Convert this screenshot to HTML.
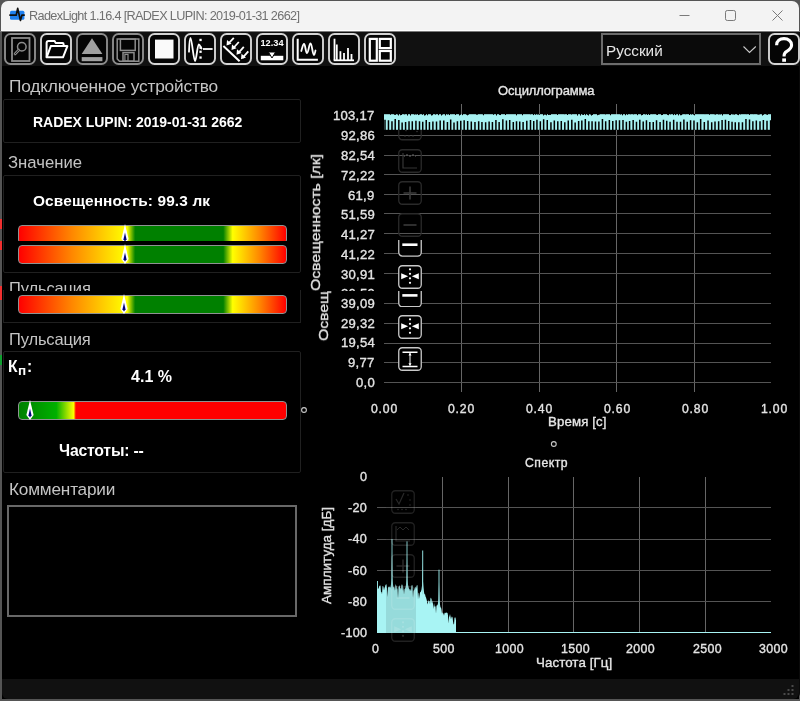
<!DOCTYPE html>
<html><head><meta charset="utf-8"><style>
html,body{margin:0;padding:0;width:800px;height:701px;overflow:hidden;background:#555;}
.t{position:absolute;font-family:"Liberation Sans",sans-serif;white-space:pre;will-change:transform;}
.a{position:absolute;}
</style></head><body>
<div class="a" style="left:1.5px;top:31px;width:798.5px;height:668px;background:#0a0a0a;border-radius:0 0 6px 6px;"></div><div class="a" style="left:1.5px;top:31px;width:797px;height:668px;background:#000;"></div>
<div class="a" style="left:3px;top:99px;width:298px;height:44px;border:1px solid #202020;background:transparent;border-radius:2px;box-sizing:border-box;"></div><div class="a" style="left:3px;top:175px;width:298px;height:98px;border:1px solid #202020;background:transparent;border-radius:2px;box-sizing:border-box;"></div><div class="a" style="left:3px;top:290px;width:298px;height:33px;border:1px solid #202020;border-top:none;background:transparent;border-radius:0px;box-sizing:border-box;"></div><div class="a" style="left:3px;top:351px;width:298px;height:122px;border:1px solid #202020;background:transparent;border-radius:2px;box-sizing:border-box;"></div><div class="a" style="left:7px;top:505px;width:290px;height:111.5px;border:2px solid #686868;background:transparent;border-radius:0px;box-sizing:border-box;"></div><div class="a" style="left:16px;top:223px;width:273px;height:18px;overflow:hidden"><div class="a" style="left:2px;top:2px;width:269px;height:19px;border:1.7px solid #8f9393;border-radius:4px;box-sizing:border-box;background:linear-gradient(to right,#ff0000 0%,#ff8800 20%,#ffff00 40%,#ffff00 40.5%,#008000 43.5%,#008000 76.5%,#ffff00 80%,#ff8800 90%,#ff0000 100%);"></div></div><div class="a" style="left:18px;top:245px;width:269px;height:19px;border:1.7px solid #8f9393;border-radius:4px;box-sizing:border-box;background:linear-gradient(to right,#ff0000 0%,#ff8800 20%,#ffff00 40%,#ffff00 40.5%,#008000 43.5%,#008000 76.5%,#ffff00 80%,#ff8800 90%,#ff0000 100%);"></div><div class="a" style="left:18px;top:295px;width:269px;height:19px;border:1.7px solid #8f9393;border-radius:4px;box-sizing:border-box;background:linear-gradient(to right,#ff0000 0%,#ff8800 20%,#ffff00 40%,#ffff00 40.5%,#008000 43.5%,#008000 76.5%,#ffff00 80%,#ff8800 90%,#ff0000 100%);"></div><div class="a" style="left:18px;top:401px;width:269px;height:19px;border:1.7px solid #8f9393;border-radius:4px;box-sizing:border-box;background:linear-gradient(to right,#008000 0%,#00b000 14%,#ffff00 20.5%,#ff0000 21.3%,#ff0000 100%);"></div><svg class="a" style="left:121px;top:224px" width="8" height="17" viewBox="0 0 8 17"><path d="M4 0 L7.6 15.0 L4 20 L0.4 15.0 Z" fill="#fff"/><path d="M4 8.4 L5.5 15.2 L4 17.6 L2.5 15.2 Z" fill="#00007a"/></svg><svg class="a" style="left:121px;top:243.6px" width="8" height="20" viewBox="0 0 8 20"><path d="M4 0 L7.6 15.0 L4 20 L0.4 15.0 Z" fill="#fff"/><path d="M4 8.4 L5.5 15.2 L4 17.6 L2.5 15.2 Z" fill="#00007a"/></svg><svg class="a" style="left:120px;top:293.5px" width="8" height="20" viewBox="0 0 8 20"><path d="M4 0 L7.6 15.0 L4 20 L0.4 15.0 Z" fill="#fff"/><path d="M4 8.4 L5.5 15.2 L4 17.6 L2.5 15.2 Z" fill="#00007a"/></svg><svg class="a" style="left:26.4px;top:400px" width="8" height="20" viewBox="0 0 8 20"><path d="M4 0 L7.6 15.0 L4 20 L0.4 15.0 Z" fill="#fff"/><path d="M4 8.4 L5.5 15.2 L4 17.6 L2.5 15.2 Z" fill="#00007a"/></svg><div class="a" style="left:1px;top:1px;width:798px;height:30px;background:#f3f3f3;border-radius:7px 7px 0 0;"></div><div class="a" style="left:1px;top:30px;width:798px;height:1px;background:#fff;"></div><div class="a" style="left:0;top:31px;width:800px;height:1px;background:#7a7a7a;"></div><div class="a" style="left:1.5px;top:32px;width:797px;height:34px;background:#111;"></div><div class="a" style="left:1.5px;top:679px;width:797.5px;height:20px;background:#111;border-radius:0 0 6px 6px;"></div><svg class="a" style="left:8px;top:7px" width="18" height="15" viewBox="0 0 18 15"><rect x="2" y="3.8" width="14.4" height="9" rx="1.5" fill="#1f80f0"/><path d="M1.3 8.2 H8.2 L9.7 1.4 L12.4 13.4 L13.9 8.2 H16.8" fill="none" stroke="#111" stroke-width="1.7" stroke-linejoin="round"/></svg><svg class="a" style="left:670px;top:0" width="130" height="31" viewBox="0 0 130 31"><path d="M9.5 15.5 H19.5" stroke="#7a7a7a" stroke-width="1"/><rect x="55.5" y="10.5" width="10" height="10" rx="1.8" fill="none" stroke="#7a7a7a" stroke-width="1"/><path d="M102.5 10.5 L112.5 20.5 M112.5 10.5 L102.5 20.5" stroke="#7a7a7a" stroke-width="1"/></svg><svg class="a" style="left:4px;top:33px;will-change:transform" width="32" height="32" viewBox="0 0 32 32"><rect x="1" y="1" width="30" height="30" rx="5.5" fill="#050505" stroke="#8c8c8c" stroke-width="1.9"/><rect x="8" y="5" width="17.5" height="23" fill="none" stroke="#8c8c8c" stroke-width="1.8"/><circle cx="17.8" cy="13.7" r="4.3" fill="none" stroke="#8c8c8c" stroke-width="1.5"/><path d="M14.8 17 L11 21" stroke="#8c8c8c" stroke-width="2.6" stroke-linecap="round"/><path d="M14.8 17 L11 21" stroke="#111" stroke-width="0.9" stroke-linecap="round"/></svg><svg class="a" style="left:40px;top:33px;will-change:transform" width="32" height="32" viewBox="0 0 32 32"><rect x="1" y="1" width="30" height="30" rx="5.5" fill="#050505" stroke="#d4d4d4" stroke-width="1.9"/><path d="M6.6 24.3 V10 Q6.6 8 8.6 8 H14.6 L15.6 9.9 H22.6 Q23.6 9.9 23.6 11.2 V12.8" fill="none" stroke="#fff" stroke-width="2" stroke-linejoin="round"/><path d="M6.6 24.3 H23 L27.4 13.1 H10.8 Z" fill="none" stroke="#fff" stroke-width="2" stroke-linejoin="round"/></svg><svg class="a" style="left:76px;top:33px;will-change:transform" width="32" height="32" viewBox="0 0 32 32"><rect x="1" y="1" width="30" height="30" rx="5.5" fill="#050505" stroke="#8c8c8c" stroke-width="1.9"/><path d="M16 5.2 L26.4 21 H5.7 Z" fill="#a0a0a0"/><rect x="5.7" y="24.1" width="20.7" height="4.1" fill="#a0a0a0"/></svg><svg class="a" style="left:112px;top:33px;will-change:transform" width="32" height="32" viewBox="0 0 32 32"><rect x="1" y="1" width="30" height="30" rx="5.5" fill="#050505" stroke="#8c8c8c" stroke-width="1.9"/><path d="M5.2 6.1 H26.8 V28.2 H7.5 L5.2 25.9 Z" fill="none" stroke="#8c8c8c" stroke-width="1.5"/><rect x="8.4" y="6.1" width="14.8" height="11.3" fill="none" stroke="#8c8c8c" stroke-width="1.5"/><rect x="11" y="19.6" width="11" height="8.6" fill="none" stroke="#8c8c8c" stroke-width="1.5"/><rect x="12.9" y="21.4" width="3.1" height="6.8" fill="none" stroke="#8c8c8c" stroke-width="1.2"/></svg><svg class="a" style="left:148px;top:33px;will-change:transform" width="32" height="32" viewBox="0 0 32 32"><rect x="1" y="1" width="30" height="30" rx="5.5" fill="#050505" stroke="#d4d4d4" stroke-width="1.9"/><rect x="7" y="6.6" width="18.5" height="18.9" fill="#fafafa"/></svg><svg class="a" style="left:184px;top:33px;will-change:transform" width="32" height="32" viewBox="0 0 32 32"><rect x="1" y="1" width="30" height="30" rx="5.5" fill="#050505" stroke="#d4d4d4" stroke-width="1.9"/><path d="M5 18.7 C5.3 10 5.8 4.8 6.5 4.8 C7.8 4.8 9.6 28 11 28 C12.4 28 13.4 11.5 14.8 11.5 C15.8 11.5 16.5 14 17.5 15.5" fill="none" stroke="#fff" stroke-width="1.8" stroke-linecap="round"/><g fill="#fff"><rect x="15.4" y="5.8" width="2.3" height="2.3"/><rect x="15.4" y="13.6" width="2.3" height="2.3"/><rect x="15.4" y="17.6" width="2.3" height="2.3"/><rect x="15.4" y="23.4" width="2.3" height="2.3"/></g><path d="M19 16 H28.6" stroke="#fff" stroke-width="1.8"/></svg><svg class="a" style="left:220px;top:33px;will-change:transform" width="32" height="32" viewBox="0 0 32 32"><rect x="1" y="1" width="30" height="30" rx="5.5" fill="#050505" stroke="#d4d4d4" stroke-width="1.9"/><path d="M3.4 12.9 L19.6 28.2" stroke="#fff" stroke-width="2"/><g fill="none" stroke="#fff" stroke-width="1.8"><path d="M13.8 4.8 L8 11"/><path d="M18.8 9 L13 15.5"/><path d="M23.8 13.8 L18 20.3"/><path d="M28.3 18.3 L22.5 24.8"/></g><g fill="#fff"><path d="M6.5 12.5 L7 7 L11.5 10.8 Z"/><path d="M11.5 17 L12 11.5 L16.5 15.3 Z"/><path d="M16.5 21.8 L17 16.3 L21.5 20.1 Z"/><path d="M21 26.3 L21.5 20.8 L26 24.6 Z"/></g></svg><svg class="a" style="left:256px;top:33px;will-change:transform" width="32" height="32" viewBox="0 0 32 32"><rect x="1" y="1" width="30" height="30" rx="5.5" fill="#050505" stroke="#d4d4d4" stroke-width="1.9"/><text x="16" y="13.4" text-anchor="middle" font-family="Liberation Sans" font-weight="bold" font-size="9.6" fill="#fff" textLength="23" lengthAdjust="spacingAndGlyphs">12.34</text><rect x="4.8" y="22.8" width="22.5" height="4.5" fill="#fff"/><path d="M12.4 19 H19.6 L16 25 Z" fill="#fff" stroke="#050505" stroke-width="1"/></svg><svg class="a" style="left:292px;top:33px;will-change:transform" width="32" height="32" viewBox="0 0 32 32"><rect x="1" y="1" width="30" height="30" rx="5.5" fill="#050505" stroke="#d4d4d4" stroke-width="1.9"/><path d="M5.7 5.7 V26.8 H25.9" fill="none" stroke="#fff" stroke-width="2"/><path d="M9.3 18 C10.5 14 11 11 12 11 C13.5 11 13.5 20 15 20 C16.5 20 17 10.5 18.5 10.5 C20 10.5 20.5 22 22 22 C22.8 22 23 19 23.5 17.5" fill="none" stroke="#fff" stroke-width="1.8" stroke-linecap="round"/></svg><svg class="a" style="left:328px;top:33px;will-change:transform" width="32" height="32" viewBox="0 0 32 32"><rect x="1" y="1" width="30" height="30" rx="5.5" fill="#050505" stroke="#d4d4d4" stroke-width="1.9"/><g stroke="#fff" stroke-width="1.8"><path d="M5.7 27.3 H26"/><path d="M6.5 5.7 V27.3"/><path d="M8.8 11.5 V27.3"/><path d="M12.4 18.2 V27.3"/><path d="M16 20 V27.3"/><path d="M20 15 V27.3"/><path d="M23.5 21 V27.3"/></g></svg><svg class="a" style="left:364px;top:33px;will-change:transform" width="32" height="32" viewBox="0 0 32 32"><rect x="1" y="1" width="30" height="30" rx="5.5" fill="#050505" stroke="#d4d4d4" stroke-width="1.9"/><g fill="none" stroke="#fff" stroke-width="2.2"><rect x="5.8" y="5.9" width="7" height="21.8"/><rect x="15.8" y="5.9" width="11" height="9.2"/><rect x="15.8" y="18" width="11" height="9.7"/></g></svg><svg class="a" style="left:768px;top:33px;will-change:transform" width="32" height="32" viewBox="0 0 32 32"><rect x="1" y="1" width="30" height="30" rx="5.5" fill="#050505" stroke="#d4d4d4" stroke-width="1.9"/><path d="M8.6 12.2 C8.6 7.8 11.8 5.6 16 5.6 C20.4 5.6 23.6 8.4 23.6 12 C23.6 15.4 21.2 16.9 18.8 18.3 C16.9 19.4 16.1 20.6 16.1 22.6 V23.6" fill="none" stroke="#fff" stroke-width="3.1"/><rect x="14.2" y="25.4" width="3.8" height="3.4" fill="#fff"/></svg><div class="a" style="left:601px;top:33px;width:160px;height:32px;border:2px solid #6c6c6c;background:#0a0a0a;box-sizing:border-box;"></div><svg class="a" style="left:740px;top:42px" width="20" height="14" viewBox="0 0 20 14"><path d="M3.5 4.5 L9.5 10.5 L15.8 4.5" fill="none" stroke="#c8c8c8" stroke-width="1.1"/></svg><div class="a" style="left:0;top:270px;width:300px;height:20.5px;overflow:hidden"><div class="t" style="left:9.3px;top:10.07px;font-size:16.5px;line-height:16.5px;color:#c4c4c4;letter-spacing:-0.144px">Пульсация</div></div><svg class="a" style="left:0;top:0" width="800" height="701" viewBox="0 0 800 701"><path d="M461.5 104 V392" stroke="#666666" stroke-width="1"/><path d="M539.5 104 V392" stroke="#666666" stroke-width="1"/><path d="M616.5 104 V392" stroke="#666666" stroke-width="1"/><path d="M694.5 104 V392" stroke="#666666" stroke-width="1"/><path d="M384 135.5 H771" stroke="#545454" stroke-width="1"/><path d="M384 155.5 H771" stroke="#545454" stroke-width="1"/><path d="M384 174.5 H771" stroke="#545454" stroke-width="1"/><path d="M384 194.5 H771" stroke="#545454" stroke-width="1"/><path d="M384 213.5 H771" stroke="#545454" stroke-width="1"/><path d="M384 233.5 H771" stroke="#545454" stroke-width="1"/><path d="M384 253.5 H771" stroke="#545454" stroke-width="1"/><path d="M384 273.5 H771" stroke="#545454" stroke-width="1"/><path d="M384 303.5 H771" stroke="#545454" stroke-width="1"/><path d="M384 323.5 H771" stroke="#545454" stroke-width="1"/><path d="M384 343.5 H771" stroke="#545454" stroke-width="1"/><path d="M384 362.5 H771" stroke="#545454" stroke-width="1"/><path d="M384 382.5 H771" stroke="#545454" stroke-width="1"/><rect x="384" y="114.2" width="387" height="15.6" fill="#a8f2f2"/><path d="M385.00 119.83 V130.00 M388.47 120.29 V130.00 M391.97 121.19 V130.00 M395.21 119.05 V130.00 M398.83 119.91 V130.00 M402.14 122.48 V130.00 M405.58 121.93 V130.00 M409.02 121.24 V130.00 M412.29 121.22 V130.00 M415.93 120.83 V130.00 M419.50 121.35 V130.00 M422.73 121.65 V130.00 M426.22 120.05 V130.00 M429.44 122.03 V130.00 M432.88 121.52 V130.00 M436.51 121.50 V130.00 M440.18 120.38 V130.00 M443.78 120.56 V130.00 M447.44 122.08 V130.00 M450.69 119.48 V130.00 M454.00 122.38 V130.00 M457.42 121.19 V130.00 M460.77 120.78 V130.00 M464.16 120.23 V130.00 M467.65 121.04 V130.00 M471.31 121.39 V130.00 M474.97 122.00 V130.00 M478.67 121.35 V130.00 M481.95 122.01 V130.00 M485.63 122.17 V130.00 M489.12 121.50 V130.00 M492.42 121.91 V130.00 M495.91 120.00 V130.00 M499.14 121.99 V130.00 M502.83 119.31 V130.00 M506.43 120.44 V130.00 M509.71 120.03 V130.00 M513.29 122.05 V130.00 M516.52 121.15 V130.00 M519.74 121.51 V130.00 M523.10 122.08 V130.00 M526.79 120.77 V130.00 M530.49 120.08 V130.00 M533.73 121.10 V130.00 M536.95 119.69 V130.00 M540.35 121.14 V130.00 M543.63 119.15 V130.00 M547.26 120.10 V130.00 M550.94 122.14 V130.00 M554.33 120.61 V130.00 M557.79 121.25 V130.00 M561.29 120.96 V130.00 M564.80 122.29 V130.00 M568.25 120.51 V130.00 M571.81 119.83 V130.00 M575.16 122.42 V130.00 M578.63 120.92 V130.00 M581.83 120.45 V130.00 M585.32 119.07 V130.00 M588.83 121.21 V130.00 M592.06 121.20 V130.00 M595.49 121.38 V130.00 M598.87 121.47 V130.00 M602.44 119.08 V130.00 M605.67 121.37 V130.00 M609.35 119.88 V130.00 M612.78 121.07 V130.00 M616.14 120.27 V130.00 M619.49 120.29 V130.00 M622.99 120.05 V130.00 M626.38 121.70 V130.00 M629.59 120.99 V130.00 M633.16 120.09 V130.00 M636.47 121.81 V130.00 M639.79 119.66 V130.00 M643.21 121.44 V130.00 M646.46 120.13 V130.00 M649.83 121.92 V130.00 M653.25 121.99 V130.00 M656.53 120.18 V130.00 M660.06 122.10 V130.00 M663.48 119.79 V130.00 M666.74 120.85 V130.00 M670.04 121.82 V130.00 M673.66 119.64 V130.00 M677.00 121.83 V130.00 M680.52 121.82 V130.00 M683.89 119.45 V130.00 M687.24 121.78 V130.00 M690.57 120.21 V130.00 M693.98 120.47 V130.00 M697.38 122.22 V130.00 M700.66 119.02 V130.00 M704.33 122.08 V130.00 M708.03 120.52 V130.00 M711.70 122.25 V130.00 M715.01 121.61 V130.00 M718.63 121.32 V130.00 M722.09 120.01 V130.00 M725.46 119.80 V130.00 M728.70 121.06 V130.00 M732.04 121.84 V130.00 M735.26 122.16 V130.00 M738.81 122.23 V130.00 M742.46 122.15 V130.00 M745.95 119.05 V130.00 M749.52 119.60 V130.00 M752.87 121.32 V130.00 M756.33 120.45 V130.00 M760.00 121.14 V130.00 M763.37 119.88 V130.00 M767.00 120.67 V130.00 M770.59 120.23 V130.00" stroke="#000" stroke-width="1.5"/><path d="M390.50 114 V114.74 M394.50 114 V114.75 M395.50 114 V114.87 M397.50 114 V114.35 M398.50 114 V115.47 M400.50 114 V115.28 M401.50 114 V114.99 M402.50 114 V114.00 M404.50 114 V114.34 M407.50 114 V115.54 M410.50 114 V115.51 M414.50 114 V114.58 M415.50 114 V114.23 M416.50 114 V114.48 M418.50 114 V115.08 M419.50 114 V114.50 M422.50 114 V114.77 M424.50 114 V115.56 M425.50 114 V115.20 M427.50 114 V115.26 M430.50 114 V114.07 M431.50 114 V115.53 M432.50 114 V115.21 M435.50 114 V114.57 M438.50 114 V115.20 M441.50 114 V115.51 M442.50 114 V114.55 M445.50 114 V115.48 M447.50 114 V114.51 M448.50 114 V114.13 M449.50 114 V115.10 M451.50 114 V114.08 M455.50 114 V114.95 M459.50 114 V115.47 M460.50 114 V114.79 M462.50 114 V115.17 M466.50 114 V114.70 M467.50 114 V115.35 M468.50 114 V114.73 M476.50 114 V114.65 M477.50 114 V114.60 M482.50 114 V114.14 M483.50 114 V115.25 M493.50 114 V114.78 M496.50 114 V115.51 M499.50 114 V114.88 M500.50 114 V115.07 M505.50 114 V115.03 M516.50 114 V115.34 M522.50 114 V115.25 M530.50 114 V114.26 M533.50 114 V115.10 M535.50 114 V114.75 M536.50 114 V114.09 M537.50 114 V114.51 M538.50 114 V114.31 M539.50 114 V114.74 M543.50 114 V115.45 M544.50 114 V114.65 M545.50 114 V114.66 M546.50 114 V115.33 M548.50 114 V114.98 M549.50 114 V114.87 M550.50 114 V114.93 M557.50 114 V114.95 M564.50 114 V114.17 M567.50 114 V115.01 M571.50 114 V114.47 M577.50 114 V115.57 M580.50 114 V115.57 M582.50 114 V114.76 M583.50 114 V114.99 M585.50 114 V115.25 M587.50 114 V114.85 M588.50 114 V115.50 M590.50 114 V114.43 M591.50 114 V115.58 M592.50 114 V114.97 M597.50 114 V115.22 M598.50 114 V114.85 M599.50 114 V114.47 M605.50 114 V114.40 M610.50 114 V115.25 M620.50 114 V114.47 M622.50 114 V115.34 M625.50 114 V115.25 M627.50 114 V114.77 M630.50 114 V114.25 M633.50 114 V114.37 M637.50 114 V115.16 M641.50 114 V115.35 M642.50 114 V115.03 M645.50 114 V114.47 M647.50 114 V114.98 M649.50 114 V115.00 M650.50 114 V114.17 M652.50 114 V114.09 M656.50 114 V114.69 M657.50 114 V114.96 M661.50 114 V115.12 M662.50 114 V115.01 M667.50 114 V114.88 M668.50 114 V115.20 M670.50 114 V114.38 M673.50 114 V115.14 M675.50 114 V115.07 M676.50 114 V114.20 M678.50 114 V115.40 M680.50 114 V115.27 M681.50 114 V115.16 M682.50 114 V114.24 M685.50 114 V114.19 M689.50 114 V115.00 M691.50 114 V114.53 M693.50 114 V114.62 M694.50 114 V115.33 M704.50 114 V114.05 M705.50 114 V114.06 M709.50 114 V114.75 M714.50 114 V114.25 M715.50 114 V114.60 M718.50 114 V114.41 M719.50 114 V114.26 M720.50 114 V114.38 M722.50 114 V115.48 M729.50 114 V115.07 M730.50 114 V115.08 M732.50 114 V114.32 M733.50 114 V114.37 M734.50 114 V114.64 M737.50 114 V114.75 M738.50 114 V115.17 M740.50 114 V114.38 M746.50 114 V114.10 M749.50 114 V114.88 M753.50 114 V114.11 M757.50 114 V114.39 M758.50 114 V114.64 M759.50 114 V114.41 M761.50 114 V114.08 M762.50 114 V115.55 M763.50 114 V114.81 M766.50 114 V114.50 M767.50 114 V114.87" stroke="#000" stroke-width="1"/><path d="M442.5 477 V632" stroke="#666666" stroke-width="1"/><path d="M508.5 477 V632" stroke="#666666" stroke-width="1"/><path d="M573.5 477 V632" stroke="#666666" stroke-width="1"/><path d="M639.5 477 V632" stroke="#666666" stroke-width="1"/><path d="M705.5 477 V632" stroke="#666666" stroke-width="1"/><path d="M377 507.5 H771" stroke="#545454" stroke-width="1"/><path d="M377 539.5 H771" stroke="#545454" stroke-width="1"/><path d="M377 570.5 H771" stroke="#545454" stroke-width="1"/><path d="M377 601.5 H771" stroke="#545454" stroke-width="1"/><path d="M377.0 632.5 L377.0 588.1 L377.5 589.1 L378.0 588.1 L378.5 588.9 L379.0 587.0 L379.5 585.6 L380.0 586.0 L380.5 585.2 L381.0 592.2 L381.5 591.8 L382.0 594.3 L382.5 586.3 L383.0 585.9 L383.5 587.0 L384.0 590.4 L384.5 587.8 L385.0 586.9 L385.5 584.7 L386.0 584.7 L386.5 583.9 L387.0 588.7 L387.5 596.9 L388.0 587.0 L388.5 587.5 L389.0 586.1 L389.5 587.1 L390.0 587.5 L390.5 587.2 L391.0 584.3 L391.5 578.5 L392.0 551.0 L392.5 578.5 L393.0 584.3 L393.5 587.5 L394.0 587.1 L394.5 587.7 L395.0 590.7 L395.5 584.1 L396.0 585.2 L396.5 585.9 L397.0 589.7 L397.5 587.5 L398.0 598.6 L398.5 586.9 L399.0 586.2 L399.5 585.1 L400.0 587.8 L400.5 587.9 L401.0 589.8 L401.5 584.4 L402.0 584.7 L402.5 584.8 L403.0 590.9 L403.5 586.8 L404.0 594.4 L404.5 589.0 L405.0 588.8 L405.5 587.6 L406.0 584.6 L406.5 579.0 L407.0 553.4 L407.5 579.0 L408.0 584.6 L408.5 586.9 L409.0 588.8 L409.5 589.0 L410.0 590.9 L410.5 588.4 L411.0 591.5 L411.5 585.6 L412.0 585.2 L412.5 585.2 L413.0 598.0 L413.5 590.5 L414.0 590.5 L414.5 588.9 L415.0 587.0 L415.5 586.7 L416.0 589.1 L416.5 586.2 L417.0 585.0 L417.5 585.4 L418.0 599.4 L418.5 593.4 L419.0 592.6 L419.5 598.7 L420.0 592.2 L420.5 592.2 L421.0 591.2 L421.5 589.4 L422.0 585.8 L422.5 562.5 L423.0 581.6 L423.5 587.7 L424.0 591.9 L424.5 594.5 L425.0 594.1 L425.5 596.6 L426.0 597.6 L426.5 599.3 L427.0 601.3 L427.5 604.5 L428.0 602.5 L428.5 600.0 L429.0 601.3 L429.5 601.1 L430.0 604.2 L430.5 597.4 L431.0 598.4 L431.5 598.5 L432.0 603.7 L432.5 600.2 L433.0 604.1 L433.5 609.1 L434.0 603.0 L434.5 606.1 L435.0 606.9 L435.5 605.7 L436.0 613.6 L436.5 605.4 L437.0 605.6 L437.5 605.1 L438.0 603.2 L438.5 599.1 L439.0 581.7 L439.5 599.8 L440.0 604.6 L440.5 607.4 L441.0 607.5 L441.5 609.4 L442.0 613.7 L442.5 612.3 L443.0 613.3 L443.5 613.7 L444.0 615.8 L444.5 613.3 L445.0 612.6 L445.5 613.2 L446.0 612.6 L446.5 612.4 L447.0 613.0 L447.5 612.8 L448.0 615.4 L448.5 623.4 L449.0 617.3 L449.5 616.0 L450.0 614.1 L450.5 616.4 L451.0 619.6 L451.5 616.3 L452.0 617.8 L452.5 616.4 L453.0 621.2 L453.5 623.9 L454.0 624.6 L454.5 617.7 L455.0 617.5 L455.5 617.6 L456.0 620.6 L456.0 632.5 Z" fill="#a8f4f4"/><path d="M377.5 581 V589" stroke="#90dcdc" stroke-width="1"/><path d="M392 539 V589" stroke="#90dcdc" stroke-width="1"/><path d="M407 541.4 V589" stroke="#90dcdc" stroke-width="1"/><path d="M422.7 550.5 V594.36" stroke="#90dcdc" stroke-width="1"/><path d="M439 569.7 V607.4" stroke="#90dcdc" stroke-width="1"/><path d="M377 632.5 H771" stroke="#a8f4f4" stroke-width="1"/></svg><div class="a" style="left:300px;top:100px;width:40px;height:191px;overflow:hidden"><div class="t" style="left:9.25px;top:190.60000000000002px;font-size:13px;line-height:13px;color:#e4e4e4;transform-origin:0 0;transform:rotate(-90deg) scaleX(1.209179170344219);-webkit-text-stroke:0.3px #e4e4e4">Освещенность [лк]</div></div><div class="a" style="left:300px;top:291px;width:40px;height:60px;overflow:hidden"><div class="t" style="left:17.25px;top:49.5px;font-size:13px;line-height:13px;color:#e4e4e4;transform-origin:0 0;transform:rotate(-90deg) scaleX(1.209179170344219);-webkit-text-stroke:0.3px #e4e4e4">Освещенность [лк]</div></div><div class="t" style="left:319.85px;top:603.6px;font-size:13px;line-height:13px;color:#e4e4e4;transform-origin:0 0;transform:rotate(-90deg) scaleX(1.038543897216274);-webkit-text-stroke:0.3px #e4e4e4">Амплитуда [дБ]</div><div class="a" style="left:330px;top:285px;width:50px;height:5.6px;overflow:hidden"><div class="t" style="left:10.82px;top:1.67px;font-size:13.1px;line-height:13.1px;color:#e4e4e4;letter-spacing:0.25px;-webkit-text-stroke:0.35px #e4e4e4">20,59</div></div><svg class="a" style="left:398px;top:130px" width="24" height="10.5" viewBox="0 13.5 24 10.5"><rect x="0.75" y="0.75" width="22.5" height="22.5" rx="3.5" fill="none" stroke="#2a2a2a" stroke-width="1.3"/><g fill="#353535"><circle cx="7" cy="19.5" r="0.8"/><circle cx="11" cy="19.5" r="0.8"/><circle cx="15" cy="19.5" r="0.8"/><circle cx="19" cy="15" r="0.8"/><circle cx="19" cy="10" r="0.8"/><circle cx="17" cy="5" r="0.8"/></g><path d="M5 9 L8 14 L13 3" fill="none" stroke="#353535" stroke-width="1.2"/></svg><svg class="a" style="left:398px;top:149.2px" width="24" height="24" viewBox="0 0 24 24"><rect x="0.75" y="0.75" width="22.5" height="22.5" rx="3.5" fill="none" stroke="#2a2a2a" stroke-width="1.3"/><path d="M5 4 V19 H19" fill="none" stroke="#353535" stroke-width="1.2"/><path d="M6 8 L9 5 L12 8 L15 5 L18 8" fill="none" stroke="#353535" stroke-width="1"/></svg><svg class="a" style="left:398px;top:181px" width="24" height="24" viewBox="0 0 24 24"><rect x="0.75" y="0.75" width="22.5" height="22.5" rx="3.5" fill="none" stroke="#2a2a2a" stroke-width="1.3"/><path d="M12 5.5 V18.5 M5.5 12 H18.5" stroke="#3a3a3a" stroke-width="1.6"/></svg><svg class="a" style="left:398px;top:213px" width="24" height="24" viewBox="0 0 24 24"><rect x="0.75" y="0.75" width="22.5" height="22.5" rx="3.5" fill="none" stroke="#2a2a2a" stroke-width="1.3"/><path d="M5.5 12 H18.5" stroke="#3a3a3a" stroke-width="1.6"/></svg><svg class="a" style="left:398px;top:240.4px" width="24" height="16.799999999999983" viewBox="0 7.200000000000017 24 16.799999999999983"><rect x="0.75" y="0.75" width="22.5" height="22.5" rx="3.5" fill="#000" stroke="#c8c8c8" stroke-width="1.3"/><rect x="4.3" y="10.6" width="15.2" height="2.6" fill="#fff"/></svg><svg class="a" style="left:398px;top:265px" width="24" height="24" viewBox="0 0 24 24"><rect x="0.75" y="0.75" width="22.5" height="22.5" rx="3.5" fill="#000" stroke="#c8c8c8" stroke-width="1.3"/><g fill="#fff"><path d="M3.2 8.3 L10.2 11.3 L3.2 14.3 Z"/><path d="M20.8 8.3 L13.8 11.3 L20.8 14.3 Z"/><circle cx="12" cy="4.3" r="1.1"/><circle cx="12" cy="8.8" r="1.1"/><circle cx="12" cy="13.3" r="1.1"/><circle cx="12" cy="17.8" r="1.1"/></g></svg><svg class="a" style="left:398px;top:290.7px" width="24" height="16.5" viewBox="0 7.5 24 16.5"><rect x="0.75" y="0.75" width="22.5" height="22.5" rx="3.5" fill="#000" stroke="#c8c8c8" stroke-width="1.3"/><rect x="4.3" y="10.6" width="15.2" height="2.6" fill="#fff"/></svg><svg class="a" style="left:398px;top:315px" width="24" height="24" viewBox="0 0 24 24"><rect x="0.75" y="0.75" width="22.5" height="22.5" rx="3.5" fill="#000" stroke="#c8c8c8" stroke-width="1.3"/><g fill="#fff"><path d="M3.2 8.3 L10.2 11.3 L3.2 14.3 Z"/><path d="M20.8 8.3 L13.8 11.3 L20.8 14.3 Z"/><circle cx="12" cy="4.3" r="1.1"/><circle cx="12" cy="8.8" r="1.1"/><circle cx="12" cy="13.3" r="1.1"/><circle cx="12" cy="17.8" r="1.1"/></g></svg><svg class="a" style="left:398px;top:347px" width="24" height="24" viewBox="0 0 24 24"><rect x="0.75" y="0.75" width="22.5" height="22.5" rx="3.5" fill="#000" stroke="#c8c8c8" stroke-width="1.3"/><path d="M4.5 5.2 H19.5 M4.5 19.5 H19.5" stroke="#fff" stroke-width="1.4"/><path d="M12 6 V18.5" stroke="#fff" stroke-width="1"/><path d="M10.5 8.5 L12 5.8 L13.5 8.5 Z M10.5 16.3 L12 19 L13.5 16.3 Z" fill="#fff"/></svg><div class="a" style="left:386px;top:486px;width:30px;height:147px;background:rgba(0,0,0,0.1)"></div><svg class="a" style="left:391px;top:490px" width="24" height="24" viewBox="0 0 24 24"><rect x="0.75" y="0.75" width="22.5" height="22.5" rx="3.5" fill="none" stroke="rgba(255,255,255,0.13)" stroke-width="1.3"/><g fill="rgba(255,255,255,0.16)"><circle cx="7" cy="19.5" r="0.8"/><circle cx="11" cy="19.5" r="0.8"/><circle cx="15" cy="19.5" r="0.8"/><circle cx="19" cy="15" r="0.8"/><circle cx="19" cy="10" r="0.8"/><circle cx="17" cy="5" r="0.8"/></g><path d="M5 9 L8 14 L13 3" fill="none" stroke="rgba(255,255,255,0.16)" stroke-width="1.2"/></svg><svg class="a" style="left:391px;top:522px" width="24" height="24" viewBox="0 0 24 24"><rect x="0.75" y="0.75" width="22.5" height="22.5" rx="3.5" fill="none" stroke="rgba(255,255,255,0.13)" stroke-width="1.3"/><path d="M5 4 V19 H19" fill="none" stroke="rgba(255,255,255,0.16)" stroke-width="1.2"/><path d="M6 8 L9 5 L12 8 L15 5 L18 8" fill="none" stroke="rgba(255,255,255,0.16)" stroke-width="1"/></svg><svg class="a" style="left:391px;top:554px" width="24" height="24" viewBox="0 0 24 24"><rect x="0.75" y="0.75" width="22.5" height="22.5" rx="3.5" fill="none" stroke="rgba(255,255,255,0.13)" stroke-width="1.3"/><path d="M12 5.5 V18.5 M5.5 12 H18.5" stroke="rgba(255,255,255,0.16)" stroke-width="1.6"/></svg><svg class="a" style="left:391px;top:586px" width="24" height="24" viewBox="0 0 24 24"><rect x="0.75" y="0.75" width="22.5" height="22.5" rx="3.5" fill="none" stroke="rgba(255,255,255,0.13)" stroke-width="1.3"/><path d="M5.5 12 H18.5" stroke="rgba(255,255,255,0.16)" stroke-width="1.6"/></svg><svg class="a" style="left:391px;top:617.5px" width="24" height="24" viewBox="0 0 24 24"><rect x="0.75" y="0.75" width="22.5" height="22.5" rx="3.5" fill="none" stroke="rgba(255,255,255,0.13)" stroke-width="1.3"/><g fill="rgba(255,255,255,0.16)"><path d="M3.2 8.3 L10.2 11.3 L3.2 14.3 Z"/><path d="M20.8 8.3 L13.8 11.3 L20.8 14.3 Z"/><circle cx="12" cy="4.3" r="1.1"/><circle cx="12" cy="8.8" r="1.1"/><circle cx="12" cy="13.3" r="1.1"/><circle cx="12" cy="17.8" r="1.1"/></g></svg><svg class="a" style="left:298px;top:404px" width="12" height="12"><circle cx="6" cy="6" r="2.4" fill="none" stroke="#c8c8c8" stroke-width="1.1"/></svg><svg class="a" style="left:548px;top:438px" width="12" height="12"><circle cx="5.8" cy="6" r="2.4" fill="none" stroke="#c8c8c8" stroke-width="1.1"/></svg><svg class="a" style="left:780px;top:680px" width="18" height="18"><g fill="#4a4a4a"><rect x="11.5" y="5" width="2" height="2"/><rect x="7.5" y="9" width="2" height="2"/><rect x="11.5" y="9" width="2" height="2"/><rect x="3.5" y="13" width="2" height="2"/><rect x="7.5" y="13" width="2" height="2"/><rect x="11.5" y="13" width="2" height="2"/></g></svg><div class="a" style="left:0;top:218.6px;width:1.5px;height:10.400000000000006px;background:#f03030"></div><div class="a" style="left:0;top:240.5px;width:1.5px;height:9.5px;background:#f03030"></div><div class="a" style="left:0;top:286px;width:1.5px;height:14px;background:#f03030"></div><div class="a" style="left:0;top:355px;width:1.5px;height:10px;background:#10a030"></div>
<div class="t" style="left:29.00px;top:9.71px;font-size:12.7px;line-height:12.7px;font-weight:400;color:#707070;letter-spacing:-0.657px;">RadexLight 1.16.4 [RADEX LUPIN: 2019-01-31 2662]</div>
<div class="t" style="left:606.30px;top:42.59px;font-size:15.3px;line-height:15.3px;font-weight:400;color:#e6e6e6;letter-spacing:-0.011px;">Русский</div>
<div class="t" style="left:9.30px;top:78.39px;font-size:17.3px;line-height:17.3px;font-weight:400;color:#c4c4c4;letter-spacing:-0.169px;">Подключенное устройство</div>
<div class="t" style="left:32.70px;top:115.10px;font-size:14px;line-height:14px;font-weight:700;color:#fff;letter-spacing:-0.030px;">RADEX LUPIN: 2019-01-31 2662</div>
<div class="t" style="left:8.40px;top:154.91px;font-size:16.7px;line-height:16.7px;font-weight:400;color:#c4c4c4;letter-spacing:0.012px;">Значение</div>
<div class="t" style="left:33.00px;top:192.91px;font-size:15.4px;line-height:15.4px;font-weight:700;color:#fff;letter-spacing:0.132px;">Освещенность: 99.3 лк</div>
<div class="t" style="left:9.30px;top:330.58px;font-size:16.5px;line-height:16.5px;font-weight:400;color:#c4c4c4;letter-spacing:-0.162px;">Пульсация</div>
<div class="t" style="left:131.00px;top:368.90px;font-size:16px;line-height:16px;font-weight:700;color:#fff;letter-spacing:0.020px;">4.1 %</div>
<div class="t" style="left:58.70px;top:442.57px;font-size:15.8px;line-height:15.8px;font-weight:700;color:#fff;letter-spacing:-0.216px;">Частоты: --</div>
<div class="t" style="left:9.00px;top:480.58px;font-size:17.2px;line-height:17.2px;font-weight:400;color:#c4c4c4;letter-spacing:-0.187px;">Комментарии</div>
<div class="t" style="left:8.10px;top:358.74px;font-size:15.6px;line-height:15.6px;font-weight:700;color:#fff;letter-spacing:0.469px;">К</div>
<div class="t" style="left:18.00px;top:363.52px;font-size:13.5px;line-height:13.5px;font-weight:700;color:#fff;letter-spacing:0.844px;">п</div>
<div class="t" style="left:27.30px;top:358.74px;font-size:15.6px;line-height:15.6px;font-weight:700;color:#fff;letter-spacing:-1.203px;">:</div>
<div class="t" style="left:333.29px;top:109.46px;font-size:13.1px;line-height:13.1px;font-weight:400;color:#e4e4e4;letter-spacing:0.250px;-webkit-text-stroke:0.35px #e4e4e4;">103,17</div>
<div class="t" style="left:340.82px;top:129.24px;font-size:13.1px;line-height:13.1px;font-weight:400;color:#e4e4e4;letter-spacing:0.250px;-webkit-text-stroke:0.35px #e4e4e4;">92,86</div>
<div class="t" style="left:340.82px;top:149.00px;font-size:13.1px;line-height:13.1px;font-weight:400;color:#e4e4e4;letter-spacing:0.250px;-webkit-text-stroke:0.35px #e4e4e4;">82,54</div>
<div class="t" style="left:340.82px;top:168.78px;font-size:13.1px;line-height:13.1px;font-weight:400;color:#e4e4e4;letter-spacing:0.250px;-webkit-text-stroke:0.35px #e4e4e4;">72,22</div>
<div class="t" style="left:348.37px;top:188.55px;font-size:13.1px;line-height:13.1px;font-weight:400;color:#e4e4e4;letter-spacing:0.250px;-webkit-text-stroke:0.35px #e4e4e4;">61,9</div>
<div class="t" style="left:340.82px;top:208.31px;font-size:13.1px;line-height:13.1px;font-weight:400;color:#e4e4e4;letter-spacing:0.250px;-webkit-text-stroke:0.35px #e4e4e4;">51,59</div>
<div class="t" style="left:340.82px;top:228.09px;font-size:13.1px;line-height:13.1px;font-weight:400;color:#e4e4e4;letter-spacing:0.250px;-webkit-text-stroke:0.35px #e4e4e4;">41,27</div>
<div class="t" style="left:340.82px;top:247.86px;font-size:13.1px;line-height:13.1px;font-weight:400;color:#e4e4e4;letter-spacing:0.250px;-webkit-text-stroke:0.35px #e4e4e4;">41,22</div>
<div class="t" style="left:340.82px;top:267.62px;font-size:13.1px;line-height:13.1px;font-weight:400;color:#e4e4e4;letter-spacing:0.250px;-webkit-text-stroke:0.35px #e4e4e4;">30,91</div>
<div class="t" style="left:340.82px;top:297.06px;font-size:13.1px;line-height:13.1px;font-weight:400;color:#e4e4e4;letter-spacing:0.250px;-webkit-text-stroke:0.35px #e4e4e4;">39,09</div>
<div class="t" style="left:340.82px;top:316.76px;font-size:13.1px;line-height:13.1px;font-weight:400;color:#e4e4e4;letter-spacing:0.250px;-webkit-text-stroke:0.35px #e4e4e4;">29,32</div>
<div class="t" style="left:340.82px;top:336.46px;font-size:13.1px;line-height:13.1px;font-weight:400;color:#e4e4e4;letter-spacing:0.250px;-webkit-text-stroke:0.35px #e4e4e4;">19,54</div>
<div class="t" style="left:348.37px;top:356.16px;font-size:13.1px;line-height:13.1px;font-weight:400;color:#e4e4e4;letter-spacing:0.250px;-webkit-text-stroke:0.35px #e4e4e4;">9,77</div>
<div class="t" style="left:355.90px;top:375.87px;font-size:13.1px;line-height:13.1px;font-weight:400;color:#e4e4e4;letter-spacing:0.250px;-webkit-text-stroke:0.35px #e4e4e4;">0,0</div>
<div class="t" style="left:370.70px;top:402.73px;font-size:12.2px;line-height:12.2px;font-weight:400;color:#e4e4e4;letter-spacing:0.822px;-webkit-text-stroke:0.35px #e4e4e4;">0.00</div>
<div class="t" style="left:448.40px;top:402.73px;font-size:12.2px;line-height:12.2px;font-weight:400;color:#e4e4e4;letter-spacing:0.822px;-webkit-text-stroke:0.35px #e4e4e4;">0.20</div>
<div class="t" style="left:526.30px;top:402.73px;font-size:12.2px;line-height:12.2px;font-weight:400;color:#e4e4e4;letter-spacing:0.822px;-webkit-text-stroke:0.35px #e4e4e4;">0.40</div>
<div class="t" style="left:603.90px;top:402.73px;font-size:12.2px;line-height:12.2px;font-weight:400;color:#e4e4e4;letter-spacing:0.822px;-webkit-text-stroke:0.35px #e4e4e4;">0.60</div>
<div class="t" style="left:682.10px;top:402.73px;font-size:12.2px;line-height:12.2px;font-weight:400;color:#e4e4e4;letter-spacing:0.822px;-webkit-text-stroke:0.35px #e4e4e4;">0.80</div>
<div class="t" style="left:760.60px;top:402.73px;font-size:12.2px;line-height:12.2px;font-weight:400;color:#e4e4e4;letter-spacing:0.822px;-webkit-text-stroke:0.35px #e4e4e4;">1.00</div>
<div class="t" style="left:359.68px;top:470.79px;font-size:12.6px;line-height:12.6px;font-weight:400;color:#e4e4e4;letter-spacing:0.300px;-webkit-text-stroke:0.35px #e4e4e4;">0</div>
<div class="t" style="left:348.20px;top:502.09px;font-size:12.6px;line-height:12.6px;font-weight:400;color:#e4e4e4;letter-spacing:0.300px;-webkit-text-stroke:0.35px #e4e4e4;">-20</div>
<div class="t" style="left:348.20px;top:533.39px;font-size:12.6px;line-height:12.6px;font-weight:400;color:#e4e4e4;letter-spacing:0.300px;-webkit-text-stroke:0.35px #e4e4e4;">-40</div>
<div class="t" style="left:348.20px;top:564.69px;font-size:12.6px;line-height:12.6px;font-weight:400;color:#e4e4e4;letter-spacing:0.300px;-webkit-text-stroke:0.35px #e4e4e4;">-60</div>
<div class="t" style="left:348.20px;top:595.99px;font-size:12.6px;line-height:12.6px;font-weight:400;color:#e4e4e4;letter-spacing:0.300px;-webkit-text-stroke:0.35px #e4e4e4;">-80</div>
<div class="t" style="left:340.88px;top:627.29px;font-size:12.6px;line-height:12.6px;font-weight:400;color:#e4e4e4;letter-spacing:0.300px;-webkit-text-stroke:0.35px #e4e4e4;">-100</div>
<div class="t" style="left:372.17px;top:643.46px;font-size:12.4px;line-height:12.4px;font-weight:400;color:#e4e4e4;letter-spacing:0.350px;-webkit-text-stroke:0.35px #e4e4e4;">0</div>
<div class="t" style="left:432.61px;top:643.46px;font-size:12.4px;line-height:12.4px;font-weight:400;color:#e4e4e4;letter-spacing:0.350px;-webkit-text-stroke:0.35px #e4e4e4;">500</div>
<div class="t" style="left:495.29px;top:643.46px;font-size:12.4px;line-height:12.4px;font-weight:400;color:#e4e4e4;letter-spacing:0.350px;-webkit-text-stroke:0.35px #e4e4e4;">1000</div>
<div class="t" style="left:560.99px;top:643.46px;font-size:12.4px;line-height:12.4px;font-weight:400;color:#e4e4e4;letter-spacing:0.350px;-webkit-text-stroke:0.35px #e4e4e4;">1500</div>
<div class="t" style="left:626.29px;top:643.46px;font-size:12.4px;line-height:12.4px;font-weight:400;color:#e4e4e4;letter-spacing:0.350px;-webkit-text-stroke:0.35px #e4e4e4;">2000</div>
<div class="t" style="left:692.69px;top:643.46px;font-size:12.4px;line-height:12.4px;font-weight:400;color:#e4e4e4;letter-spacing:0.350px;-webkit-text-stroke:0.35px #e4e4e4;">2500</div>
<div class="t" style="left:758.69px;top:643.46px;font-size:12.4px;line-height:12.4px;font-weight:400;color:#e4e4e4;letter-spacing:0.350px;-webkit-text-stroke:0.35px #e4e4e4;">3000</div>
<div class="t" style="left:498.40px;top:84.05px;font-size:13px;line-height:13px;font-weight:400;color:#e8e8e8;letter-spacing:-0.132px;-webkit-text-stroke:0.35px #e4e4e4;">Осциллограмма</div>
<div class="t" style="left:547.80px;top:414.78px;font-size:13.2px;line-height:13.2px;font-weight:400;color:#e8e8e8;letter-spacing:0.154px;-webkit-text-stroke:0.35px #e4e4e4;">Время [с]</div>
<div class="t" style="left:525.40px;top:457.13px;font-size:12.2px;line-height:12.2px;font-weight:400;color:#e8e8e8;letter-spacing:0.517px;-webkit-text-stroke:0.35px #e4e4e4;">Спектр</div>
<div class="t" style="left:535.70px;top:656.00px;font-size:13.3px;line-height:13.3px;font-weight:400;color:#e8e8e8;letter-spacing:0.083px;-webkit-text-stroke:0.35px #e4e4e4;">Частота [Гц]</div>
</body></html>
